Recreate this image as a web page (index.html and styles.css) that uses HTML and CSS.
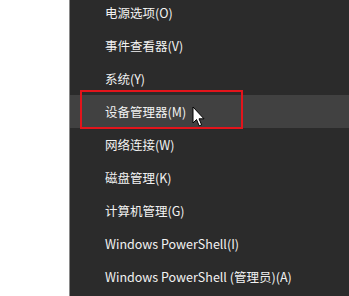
FILE: index.html
```html
<!DOCTYPE html>
<html>
<head>
	<meta charset="UTF-8">
	<title>Win+X Menu</title>
	<link rel="stylesheet" href="styles.css">
</head>
<body>
	<div class="screen">
		<div class="desk"></div>
		<div class="menu">
			<ul class="items">
				<li>电源选项(O)</li>
				<li>事件查看器(V)</li>
				<li>系统(Y)</li>
				<li class="hover">设备管理器(M)</li>
				<li>网络连接(W)</li>
				<li>磁盘管理(K)</li>
				<li>计算机管理(G)</li>
				<li>Windows PowerShell(I)</li>
				<li>Windows PowerShell (管理员)(A)</li>
			</ul>
		</div>
		<div class="mark"></div>
		<svg class="cursor" width="14" height="22" viewBox="0 0 14 22">
			<path d="M1 1 L1 17 L4.5 13.5 L7.2 19.8 L9.6 18.8 L7 12.8 L12 12.8 Z" fill="#fff" stroke="#000" stroke-width="1" stroke-linejoin="miter"/>
		</svg>
	</div>
</body>
</html>
```

FILE: styles.css
```css
body {
	margin: 0;
	background: #fff;
	font-family: "Noto Sans CJK SC", "Noto Sans", sans-serif;
}

.screen {
	position: relative;
	display: flex;
	width: 349px;
	height: 296px;
	overflow: hidden;
}

.desk {
	width: 69px;
	background: #fff;
}

.menu {
	flex: 1;
	background: #2b2b2b;
	border-left: 1px solid #8a8a8a;
}

.items {
	list-style: none;
	margin: -4px 0 0 0;
	padding: 0;
}

.items li {
	height: 33px;
	line-height: 33px;
	padding-left: 35px;
	font-size: 12.5px;
	color: #f2f2f2;
	white-space: nowrap;
}

.items li.hover {
	background: #414141;
}

/* red annotation box drawn over the menu */
.mark {
	position: absolute;
	left: 80px;
	top: 90px;
	width: 159px;
	height: 35px;
	border: 2px solid #e3141b;
}

.cursor {
	position: absolute;
	left: 192px;
	top: 106px;
}
```
